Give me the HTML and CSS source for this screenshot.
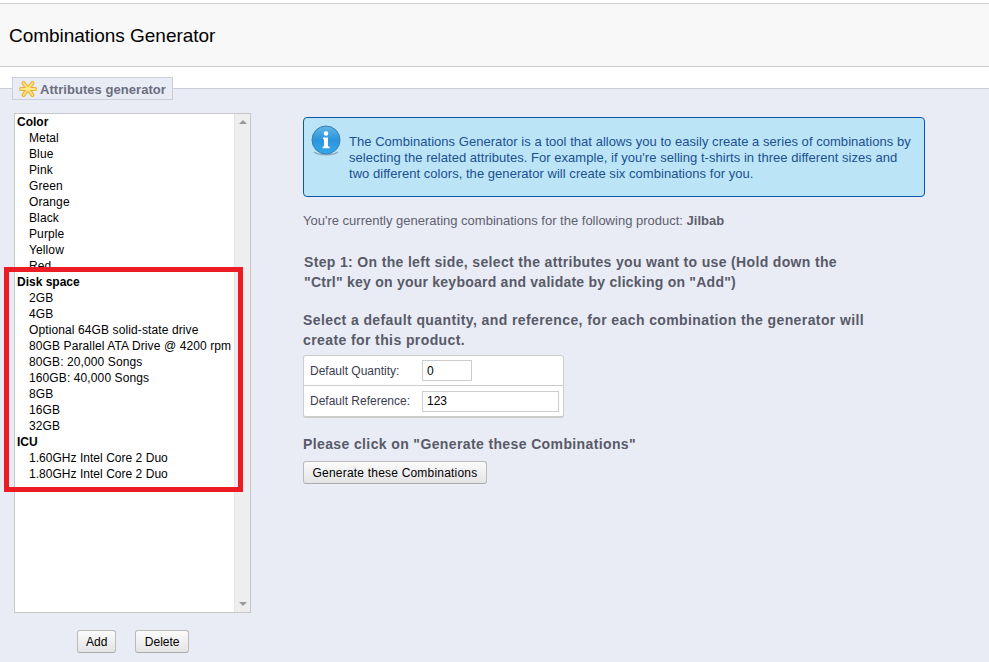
FILE: index.html
```html
<!DOCTYPE html>
<html lang="en">
<head>
<meta charset="utf-8">
<title>Combinations Generator</title>
<link rel="stylesheet" href="styles.css">
</head>
<body>
<header class="page-head"><h1>Combinations Generator</h1></header>
<section class="panel">
  <div class="legend">
    <svg class="legend-icon" width="18" height="18" viewBox="0 0 18 18">
      <g stroke="#eeb02c" stroke-width="4" stroke-linecap="round"><path d="M2 9h14M4.500 3l9 12M13.500 3l-9 12"/></g>
      <g stroke="#ffe88c" stroke-width="1.800" stroke-linecap="round"><path d="M2 9h14M4.500 3l9 12M13.500 3l-9 12"/></g>
    </svg>
    <span>Attributes generator</span>
  </div>
  <div class="columns">
    <div class="left">
      <div class="select">
        <ul class="options">
          <li class="group">Color</li>
          <li>Metal</li><li>Blue</li><li>Pink</li><li>Green</li><li>Orange</li><li>Black</li><li>Purple</li><li>Yellow</li><li>Red</li>
          <li class="group">Disk space</li>
          <li>2GB</li><li>4GB</li><li>Optional 64GB solid-state drive</li><li>80GB Parallel ATA Drive @ 4200 rpm</li><li>80GB: 20,000 Songs</li><li>160GB: 40,000 Songs</li><li>8GB</li><li>16GB</li><li>32GB</li>
          <li class="group">ICU</li>
          <li class="cpu">1.60GHz Intel Core 2 Duo</li><li class="cpu">1.80GHz Intel Core 2 Duo</li>
        </ul>
        <div class="scrollbar">
          <span class="arrow up"></span>
          <span class="arrow down"></span>
        </div>
      </div>
      <div class="actions">
        <button class="btn" type="button">Add</button>
        <button class="btn" type="button">Delete</button>
      </div>
    </div>
    <div class="right">
      <div class="info">
        <svg class="info-icon" width="30" height="31" viewBox="0 0 30 31">
          <defs>
            <linearGradient id="ig" x1="0" y1="0" x2="0" y2="1">
              <stop offset="0" stop-color="#63b5e6"/>
              <stop offset=".5" stop-color="#2a94dc"/>
              <stop offset="1" stop-color="#34a8ee"/>
            </linearGradient>
          </defs>
          <path d="M3 27a13.500 5 0 0 0 24 0" fill="none" stroke="#8aa9bb" stroke-width="1.500"/>
          <circle cx="15" cy="15" r="14" fill="url(#ig)" stroke="#3b7fa8"/>
          <circle cx="15" cy="8.500" r="2.300" fill="#fff"/>
          <path d="M12 12.500h5v9h1.600v1.800h-7v-1.800H13v-7.200h-1z" fill="#fff"/>
        </svg>
        <p>The Combinations Generator is a tool that allows you to easily create a series of combinations by<br>selecting the related attributes. For example, if you're selling t-shirts in three different sizes and<br>two different colors, the generator will create six combinations for you.</p>
      </div>
      <p class="current">You're currently generating combinations for the following product: <b>Jilbab</b></p>
      <h2 class="step">Step 1: On the left side, select the attributes you want to use (Hold down the<br><span class="tight">"Ctrl" key on your keyboard and validate by clicking on "Add")</span></h2>
      <h2 class="step second">Select a default quantity, and reference, for each combination the generator will<br>create for this product.</h2>
      <div class="defaults">
        <div class="row"><label>Default Quantity:</label><input class="field qty" type="text" value="0"></div>
        <div class="row"><label>Default Reference:</label><input class="field ref" type="text" value="123"></div>
      </div>
      <h2 class="step third">Please click on "Generate these Combinations"</h2>
      <button class="btn generate" type="button">Generate these Combinations</button>
    </div>
  </div>
</section>
<div class="highlight"></div>
</body>
</html>
```
FILE: styles.css
```css
* { box-sizing: border-box; }
html, body { margin: 0; padding: 0; height: 662px; overflow: hidden; }
body {
  background: #fff;
  font-family: "Liberation Sans", Arial, sans-serif;
  font-size: 12px;
  color: #000;
  padding-top: 3px;
  position: relative;
}
.page-head {
  height: 64px;
  background: #f8f8f8;
  border-top: 1px solid #ccc;
  border-bottom: 1px solid #ccc;
  display: flex;
  align-items: center;
  padding: 1px 0 0 9px;
}
h1 { margin: 0; font-size: 19px; font-weight: 400; color: #000; letter-spacing: -.03px; }
.panel {
  margin-top: 21px;
  height: 574px;
  background: #e9ecf4;
  border-top: 1px solid #ccced7;
  padding: 0 0 0 12px;
}
.legend {
  width: 161px;
  height: 23px;
  margin-top: -12px;
  background: #e9ecf4;
  border: 1px solid #ccced7;
  display: flex;
  align-items: center;
  gap: 3px;
  padding: 1px 0 0 6px;
  font-size: 13px;
  font-weight: 700;
  color: #6b6e80;
}
.legend-icon { margin-top: -1px; }
.legend span { letter-spacing: .05px; }
.columns { display: flex; margin-top: 13px; }
.left { width: 239px; margin-left: 2px; }
.select {
  width: 237px;
  height: 500px;
  background: #fff;
  border: 1px solid #c8c8c8;
  display: flex;
}
.options {
  flex: 1;
  list-style: none;
  margin: 0;
  padding: 0;
  overflow: hidden;
  letter-spacing: .11px;
}
.options li { height: 16px; line-height: 16px; padding-left: 14px; white-space: nowrap; }
.options .group { padding-left: 2px; font-weight: 700; letter-spacing: 0; }
.options .cpu { letter-spacing: .03px; }
.scrollbar {
  width: 16px;
  background: #eee;
  border-left: 1px solid #e4e4e4;
  display: flex;
  flex-direction: column;
  justify-content: space-between;
  align-items: center;
  padding: 6px 0;
}
.arrow { width: 0; height: 0; border-left: 4px solid transparent; border-right: 4px solid transparent; }
.arrow.up { border-bottom: 4px solid #999; }
.arrow.down { border-top: 4px solid #999; }
.actions { display: flex; justify-content: flex-start; gap: 19px; margin: 17px 0 0 63px; }
.btn {
  height: 23px;
  padding: 0 8px;
  font: 12px "Liberation Sans", Arial, sans-serif;
  color: #000;
  background: linear-gradient(#fbfbfb, #e4e4e4);
  border: 1px solid #bbb;
  border-bottom-color: #aaa;
  border-radius: 3px;
}
.actions .btn + .btn { padding: 0 8.5px; }
.right { margin-left: 50px; width: 622px; margin-top: 4px; color: #5f6070; font-size: 13px; }
.info {
  height: 80px;
  background: #bbe4f7;
  border: 1px solid #0b58a8;
  border-radius: 4px;
  color: #20508f;
  display: flex;
  padding: 7px 0 0 7px;
}
.info-icon { flex: none; }
.info p { margin: 9px 0 0 8px; line-height: 16px; white-space: nowrap; letter-spacing: .04px; }
.current { margin: 16px 0 0; line-height: 16px; white-space: nowrap; }
.step { margin: 0; font-size: 14px; font-weight: 700; line-height: 20px; white-space: nowrap; color: #585a69; letter-spacing: .34px; }
.tight { letter-spacing: .24px; }
.current + .step { margin-top: 23px; padding-left: 1px; }
.step.second { margin-top: 18px; padding-left: 0; letter-spacing: .4px; }
.step.third { margin-top: 16px; letter-spacing: .38px; }
.defaults {
  width: 261px;
  margin-top: 5px;
  background: #fff;
  border: 1px solid #ccc;
  border-bottom-width: 2px;
  border-radius: 3px;
  color: #3c3c50;
  font-size: 12px;
}
.row { height: 29px; display: flex; align-items: center; padding-left: 6px; }
.row + .row { height: 31px; border-top: 1px solid #ccc; }
.row label { width: 112px; }
.field {
  height: 21px;
  padding: 0 4px;
  border: 1px solid #ccc;
  font: 12px "Liberation Sans", Arial, sans-serif;
  color: #000;
  background: #fff;
}
.qty { width: 50px; }
.ref { width: 137px; }
.generate { display: block; margin-top: 7px; width: 184px; padding: 0; letter-spacing: .2px; }
.highlight {
  position: absolute;
  left: 4px;
  top: 267px;
  width: 239px;
  height: 225px;
  border: 5px solid #ed1c24;
  pointer-events: none;
}
```
